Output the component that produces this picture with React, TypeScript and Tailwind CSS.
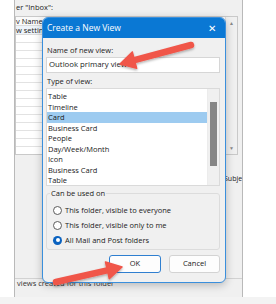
import React from 'react';

const viewTypes = ['Table', 'Timeline', 'Card', 'Business Card', 'People', 'Day/Week/Month', 'Icon', 'Business Card', 'Table'];

const scopes = [
  { label: 'This folder, visible to everyone', checked: false },
  { label: 'This folder, visible only to me', checked: false },
  { label: 'All Mail and Post folders', checked: true },
];

/** Red callout arrow: thick rounded shaft with a triangular head at `tip`. */
function Arrow({ tail, tip }: { tail: [number, number]; tip: [number, number] }) {
  const dx = tip[0] - tail[0];
  const dy = tip[1] - tail[1];
  const len = Math.hypot(dx, dy);
  const ux = dx / len;
  const uy = dy / len;
  const head = 15;
  const half = 8.5;
  const bx = tip[0] - ux * head;
  const by = tip[1] - uy * head;
  const pts = [
    [tip[0], tip[1]],
    [bx - uy * half, by + ux * half],
    [bx + uy * half, by - ux * half],
  ].map((p) => p.join(',')).join(' ');
  return (
    <g filter="url(#arrowShadow)">
      <line x1={tail[0]} y1={tail[1]} x2={bx + ux * 2} y2={by + uy * 2} stroke="#f0564a" strokeWidth={6.5} strokeLinecap="round" />
      <polygon points={pts} fill="#f0564a" stroke="#f0564a" strokeWidth={1.5} strokeLinejoin="round" />
    </g>
  );
}

function BackWindow() {
  return (
    <div className="flex h-[297px] w-[229px] flex-col overflow-hidden border-x border-[#b9b9b9] bg-[#f0f0f0] text-[7.5px] text-[#222]">
      <div className="h-[16px] pt-[2px] pl-[1px] leading-[10px]">er "Inbox":</div>
      <div className="flex h-[139px] w-[223px] border border-[#c9c9c9] bg-white">
        <div className="flex flex-1 flex-col">
          <div className="h-[9px] border-b border-[#dcdcdc] bg-[#fafafa] leading-[8px]">v Name</div>
          <div className="h-[9px] border-b border-[#dcdcdc] bg-[#eef4fa] leading-[8px]">w setting</div>
          {Array.from({ length: 14 }).map((_, i) => (
            <div key={i} className="h-[8px] border-b border-[#e2e2e2]" />
          ))}
        </div>
        <div className="flex w-[12px] flex-col items-center justify-between border-l border-[#dcdcdc] bg-[#f0f0f0] py-[3px] text-[5px] leading-[6px] text-[#888]">
          <span>▲</span>
          <span>▼</span>
        </div>
      </div>
      <div className="flex flex-1 flex-col">
        <div className="mt-[19px] whitespace-nowrap pl-[209px] text-[7px] leading-[10px]">Subje</div>
        <div className="mt-auto mb-[18px] h-px bg-[#d2d2d2]" />
      </div>
    </div>
  );
}

export default function App() {
  return (
    <div className="relative h-[304px] w-[276px] overflow-hidden bg-white font-['Open_Sans',sans-serif]">
      <div className="flex">
        <div className="w-[14px]" />
        <BackWindow />
      </div>
      <div className="h-[7px] bg-[#f3f3f3]" />
      <div className="absolute left-[17px] top-[278px] text-[7.5px] leading-[10px] text-[#333]">views created for this folder</div>

      {/* Create a New View dialog */}
      <div className="absolute left-[42px] top-[17px] flex h-[266px] w-[184px] flex-col overflow-hidden rounded-[6px] border border-[#3a8fdc] bg-[#f0f0f0] shadow-[0_2px_8px_rgba(0,0,0,0.25)]">
        <div className="flex h-[20px] items-center justify-between bg-[#0a78d4] pl-[4px] pr-[9px] text-[8.5px] text-white">
          <span>Create a New View</span>
          <span className="text-[10px] font-light leading-none">✕</span>
        </div>
        <div className="flex flex-1 flex-col px-[3px] pr-[5px] text-[7.5px] text-[#1a1a1a]">
          <div className="mt-[7px] pl-[1px] leading-[10px]">Name of new view:</div>
          <div className="mt-[2px] flex h-[16px] items-center border border-[#d6d6d6] bg-white px-[2px] text-[7.8px]">Outlook primary view</div>
          <div className="mt-[3px] pl-[1px] leading-[10px]">Type of view:</div>
          <div className="mt-[2px] flex h-[98px] border border-[#dadada] bg-white">
            <div className="flex flex-1 flex-col pt-[2px]">
              {viewTypes.map((t, i) => (
                <div key={i} className={['h-[10.5px] pl-[1px] leading-[10.5px]', t === 'Card' ? 'bg-[#9dcbf0]' : ''].join(' ')}>{t}</div>
              ))}
            </div>
            <div className="flex w-[12px] justify-center border-l border-[#ececec] bg-[#f0f0f0] pt-[13px]">
              <div className="h-[64px] w-[7px] bg-[#868686]" />
            </div>
          </div>
          <fieldset className="mt-[2px] h-[62px] rounded-[3px] border border-[#dcdcdc] px-[6px]">
            <legend className="ml-[-3px] px-[1px] leading-[10px]">Can be used on</legend>
            <div className="mt-[7px] flex flex-col gap-[5px]">
              {scopes.map((s) => (
                <label key={s.label} className="flex h-[10px] items-center gap-[3px] leading-[10px]">
                  {s.checked ? (
                    <span className="flex h-[9px] w-[9px] items-center justify-center rounded-full bg-[#0a62c0]">
                      <span className="h-[4px] w-[4px] rounded-full bg-white" />
                    </span>
                  ) : (
                    <span className="h-[9px] w-[9px] rounded-full border border-[#5c5c5c] bg-white" />
                  )}
                  {s.label}
                </label>
              ))}
            </div>
          </fieldset>
          <div className="mt-[5px] flex justify-end gap-[8px]">
            <button type="button" className="h-[18px] w-[52px] rounded-[3px] border border-[#2f7fd0] bg-[#fdfdfd] text-[7.5px]">OK</button>
            <button type="button" className="h-[18px] w-[51px] rounded-[3px] border border-[#d3d3d3] bg-[#fdfdfd] text-[7.5px]">Cancel</button>
          </div>
        </div>
      </div>

      <svg className="pointer-events-none absolute inset-0" width={276} height={304}>
        <defs>
          <filter id="arrowShadow" x="-20%" y="-20%" width="140%" height="160%">
            <feDropShadow dx="0" dy="1.5" stdDeviation="1.2" floodColor="#000" floodOpacity="0.3" />
          </filter>
        </defs>
        <Arrow tail={[191, 45]} tip={[120, 64]} />
        <Arrow tail={[56, 282]} tip={[122, 267]} />
      </svg>
    </div>
  );
}
